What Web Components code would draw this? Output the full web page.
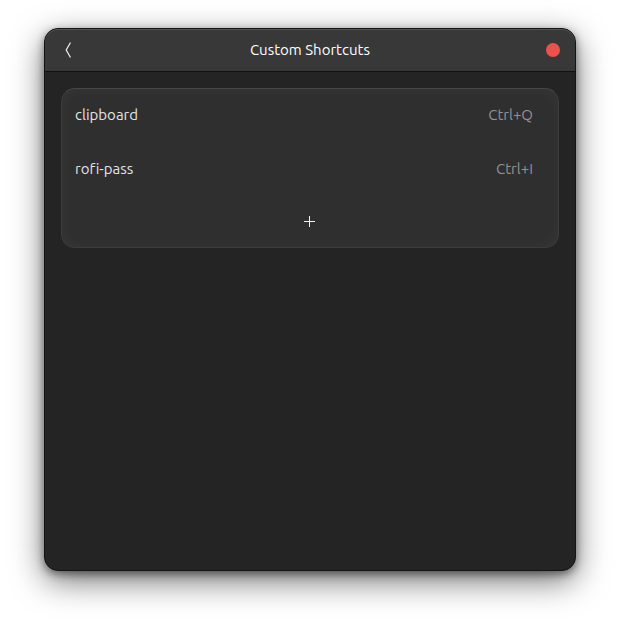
<!DOCTYPE html>
<html lang="en">
<head>
<meta charset="utf-8">
<title>Custom Shortcuts</title>
<style>
html, body { height: 100%; }
body { margin: 0; background: #fff; box-sizing: border-box; padding: 28px 44px 60px; font: 15px/20px Ubuntu, "Noto Sans", sans-serif; font-variant-ligatures: none; color: #fff; }
</style>
</head>
<body>
<app-window>
  <title-bar slot="header">Custom Shortcuts</title-bar>
  <shortcut-list>
    <shortcut-row keys="Ctrl+Q">clipboard</shortcut-row>
    <shortcut-row keys="Ctrl+I">rofi-pass</shortcut-row>
  </shortcut-list>
</app-window>
<script>
const define = (name, html, setup) => {
  customElements.define(name, class extends HTMLElement {
    constructor() {
      super();
      this.attachShadow({ mode: 'open' }).innerHTML = html;
    }
    connectedCallback() { if (setup) setup(this, this.shadowRoot); }
  });
};

define('app-window', `
<style>
:host { display: flex; flex-direction: column; box-sizing: border-box; height: 100%; border: 1px solid #141414; border-radius: 14px; background: #242424; overflow: hidden; box-shadow: 0 3px 8px rgba(0,0,0,.45), 0 10px 32px rgba(0,0,0,.55); }
main { flex: 1; padding: 16px; }
</style>
<slot name="header"></slot>
<main><slot></slot></main>`);

define('title-bar', `
<style>
:host { display: block; background: #383838; border-bottom: 1px solid #101010; box-shadow: inset 0 1px #545454; border-radius: 13px 13px 0 0; }
header { display: grid; grid-template-columns: 44px 1fr 44px; align-items: center; height: 42px; }
h1 { margin: 0; font: inherit; text-align: center; }
button { border: 0; padding: 0; background: none; color: #f4f4f4; display: flex; align-items: center; justify-content: center; height: 32px; width: 44px; }
.close i { width: 14px; height: 14px; border-radius: 50%; background: #eb524b; }
</style>
<header>
  <button aria-label="Back"><svg width="8" height="16" viewBox="0 0 8 16" fill="none" stroke="currentColor" stroke-width="1.2"><path d="M7.500 .5 3.200 8l4.300 7.500"/></svg></button>
  <h1><slot></slot></h1>
  <button class="close" aria-label="Close"><i></i></button>
</header>`);

define('shortcut-list', `
<style>
:host { display: block; border: 1px solid #3c3c3c; border-top-color: #464646; border-radius: 14px; background: #2f2f2f; box-shadow: inset 0 0 16px rgba(255,255,255,.04); }
div { display: grid; gap: 2px; }
button { display: flex; width: 100%; height: 52px; padding: 0; border: 0; background: none; color: #f2f2f2; align-items: center; justify-content: center; }
</style>
<div role="list"><slot></slot></div>
<button aria-label="Add shortcut"><svg width="12" height="12" viewBox="0 0 12 12" stroke="currentColor"><path d="M0 6.500h11M5.500 1v11"/></svg></button>`);

define('shortcut-row', `
<style>
:host { display: flex; align-items: center; justify-content: space-between; height: 52px; padding: 0 25px 0 13px; color: #e4e4e4; }
kbd { font: inherit; color: #929292; }
</style>
<span><slot></slot></span><kbd></kbd>`, (host, root) => {
  host.setAttribute('role', 'listitem');
  root.querySelector('kbd').textContent = host.getAttribute('keys');
});
</script>
</body>
</html>
